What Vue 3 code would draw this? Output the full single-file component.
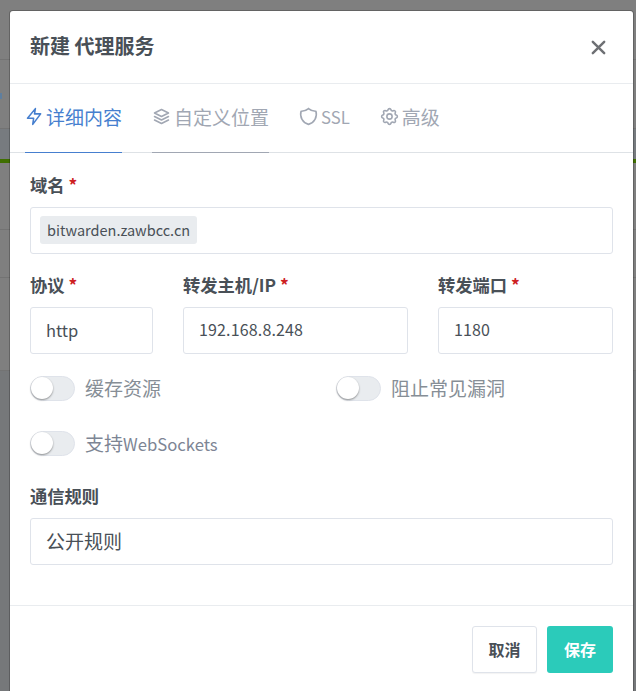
<script setup>
const tabs = [
  { label: '详细内容', icon: 'bolt', active: true },
  { label: '自定义位置', icon: 'layers', touched: true },
  { label: 'SSL', icon: 'shield', latin: true },
  { label: '高级', icon: 'gear' },
]
</script>

<template>
  <div class="backdrop">
    <i class="bg-line" style="top: 59px"></i>
    <i class="bg-line" style="top: 128px"></i>
    <i class="bg-green"></i>
    <i class="bg-line" style="top: 229px"></i>
    <i class="bg-line" style="top: 277px"></i>
    <i class="bg-line" style="top: 370px"></i>
    <i class="bg-link"></i>
    <div class="modal">
      <header class="head">
        <h2>新建 代理服务</h2>
        <svg class="close" viewBox="0 0 24 24" fill="none" stroke="#6e7074" stroke-width="2.800" stroke-linecap="round"><path d="M5.500 5.500l13 13M18.500 5.500l-13 13" /></svg>
      </header>
      <nav class="tabs">
        <a v-for="t in tabs" :key="t.label" class="tab" :class="{ active: t.active, touched: t.touched }">
          <svg class="ic" viewBox="0 0 24 24" fill="none" stroke="currentColor" stroke-width="1.800" stroke-linejoin="round" stroke-linecap="round">
            <path v-if="t.icon === 'bolt'" d="M13 3L4 14h7l-1 7 9-12h-7l1-6z" />
            <path v-else-if="t.icon === 'layers'" d="M12 4l-8 4 8 4 8-4-8-4M4 12l8 4 8-4M4 16l8 4 8-4" />
            <path v-else-if="t.icon === 'shield'" d="M12 3a12 12 0 0 0 8.500 3a12 12 0 0 1-8.500 15a12 12 0 0 1-8.500-15a12 12 0 0 0 8.500-3" />
            <template v-else>
              <circle cx="12" cy="12" r="3" />
              <path d="M10.325 4.317c.426-1.756 2.924-1.756 3.350 0a1.724 1.724 0 0 0 2.573 1.066c1.543-.94 3.310.826 2.370 2.370a1.724 1.724 0 0 0 1.065 2.572c1.756.426 1.756 2.924 0 3.350a1.724 1.724 0 0 0-1.066 2.573c.94 1.543-.826 3.310-2.370 2.370a1.724 1.724 0 0 0-2.572 1.065c-.426 1.756-2.924 1.756-3.350 0a1.724 1.724 0 0 0-2.573-1.066c-1.543.94-3.310-.826-2.370-2.370a1.724 1.724 0 0 0-1.065-2.572c-1.756-.426-1.756-2.924 0-3.350a1.724 1.724 0 0 0 1.066-2.573c-.94-1.543.826-3.310 2.370-2.370 1 .608 2.296.07 2.572-1.065z" />
            </template>
          </svg>
          <span :class="{ latin: t.latin }">{{ t.label }}</span>
        </a>
      </nav>
      <main class="body">
        <label class="lab">域名 <b>*</b></label>
        <div class="input domain"><span class="tag">bitwarden.zawbcc.cn</span></div>
        <div class="row3">
          <div>
            <label class="lab">协议 <b>*</b></label>
            <div class="input proto">http</div>
          </div>
          <div>
            <label class="lab">转发主机/IP <b>*</b></label>
            <div class="input num">192.168.8.248</div>
          </div>
          <div>
            <label class="lab">转发端口 <b>*</b></label>
            <div class="input num">1180</div>
          </div>
        </div>
        <div class="switches">
          <div class="sw"><i class="track"><i class="knob"></i></i><span>缓存资源</span></div>
          <div class="sw"><i class="track"><i class="knob"></i></i><span>阻止常见漏洞</span></div>
          <div class="sw"><i class="track"><i class="knob"></i></i><span>支持<span class="latin">WebSockets</span></span></div>
        </div>
        <label class="lab rules">通信规则</label>
        <div class="input big">公开规则</div>
      </main>
      <footer class="foot">
        <button class="btn cancel">取消</button>
        <button class="btn save">保存</button>
      </footer>
    </div>
  </div>
</template>

<style>
html, body { margin: 0; padding: 0; }
</style>

<style scoped>
.backdrop {
  position: relative;
  width: 636px;
  height: 691px;
  overflow: hidden;
  background: linear-gradient(#7f7f7f 0 128px, #777b7f 128px 160px, #7f7f7f 160px 370px, #76787a 370px);
  padding: 11px 3px 0 10px;
  box-sizing: border-box;
  font-family: "Noto Sans CJK SC", "Noto Sans", sans-serif;
  color: #495057;
}
.bg-line { position: absolute; left: 0; right: 0; height: 1px; background: #737373; }
.bg-green { position: absolute; left: 0; right: 0; top: 159px; height: 4px; background: #3f6f00; }
.bg-link { position: absolute; left: 0; top: 93px; width: 2px; height: 6px; background: #5f7f9f; }
.modal {
  position: relative;
  background: #fff;
  border-radius: 3px 3px 0 0;
  height: 680px;
  box-shadow: 0 0 0 1px rgba(0,0,0,.22);
  display: flex;
  flex-direction: column;
}
.head {
  height: 72px;
  padding: 0 20px;
  display: flex;
  align-items: center;
  justify-content: space-between;
  border-bottom: 1px solid #e9ecef;
  box-sizing: content-box;
  flex: none;
}
h2 { margin: 0 0 2px; font-size: 20px; font-weight: 700; color: #495057; line-height: 1; }
.close { width: 21px; height: 21px; margin-right: 4px; }
.tabs {
  height: 68px;
  flex: none;
  display: flex;
  gap: 30px;
  padding-left: 15px;
  border-bottom: 1px solid #dee2e6;
}
.tab {
  display: flex;
  align-items: center;
  gap: 2px;
  height: 69px;
  box-sizing: border-box;
  padding-bottom: 3px;
  font-size: 19px;
  color: #a1a7b3;
  border-bottom: 1px solid transparent;
}
.tab.active { color: #467fcf; border-bottom-color: #467fcf; gap: 1px; }
.tab.touched { border-bottom-color: #a1a7b3; }
.latin { font-size: 16.700px; }
.ic { width: 21px; height: 21px; flex: none; margin-left: -1px; }
.body { flex: 1; padding: 21px 20px 0; }
.lab {
  display: block;
  font-size: 17.300px;
  font-weight: 700;
  line-height: 22px;
  color: #495057;
  margin-bottom: 11px;
}
.lab b { color: #cd201f; font-weight: 700; }
.input {
  height: 47px;
  box-sizing: border-box;
  border: 1px solid #dfe3ea;
  border-radius: 3px;
  padding: 0 15px 3px;
  display: flex;
  align-items: center;
  font-size: 16px;
  color: #495057;
}
.input.big { font-size: 19px; }
.input.proto { font-size: 16.500px; padding-bottom: 2px; }
.input.num { letter-spacing: .15px; }
.domain { padding: 0 9px 1px; margin-bottom: 20px; }
.tag {
  background: #e9ecef;
  border-radius: 3px;
  padding: 0 7px;
  line-height: 28px;
  font-size: 14.500px;
}
.row3 {
  display: grid;
  grid-template-columns: 123px 225px 175px;
  justify-content: space-between;
}
.switches {
  display: grid;
  grid-template-columns: 306px 1fr;
  row-gap: 30px;
  margin-top: 22px;
}
.sw { display: flex; align-items: center; gap: 10px; height: 25px; font-size: 19px; color: #868e96; }
.sw > span { padding-bottom: 2px; }
.sw:nth-child(3) span { color: #7d8594; }
.track {
  position: relative;
  display: block;
  width: 45px;
  height: 25px;
  box-sizing: border-box;
  border: 1px solid #dfe3ea;
  border-radius: 13px;
  background: #e9ecef;
  flex: none;
}
.knob {
  position: absolute;
  left: 0;
  top: 0;
  width: 22px;
  height: 22px;
  border-radius: 50%;
  background: #fff;
  box-shadow: 0 1px 2px rgba(0,0,0,.4);
}
.rules { margin-top: 29px; }
.foot {
  height: 86px;
  flex: none;
  display: flex;
  justify-content: flex-end;
  align-items: flex-start;
  gap: 10px;
  padding: 20px 20px 0;
  box-sizing: border-box;
  border-top: 1px solid #e9ecef;
}
.btn {
  height: 47px;
  border-radius: 3px;
  font-family: inherit;
  font-size: 16px;
  font-weight: 700;
  padding: 0 0 2px;
}
.cancel { width: 65px; background: #fff; border: 1px solid #dfe3ea; color: #495057; box-shadow: 0 1px 1px rgba(0,0,0,.05); }
.save { width: 66px; background: #2bcbba; border: 0; color: #fff; }
</style>
